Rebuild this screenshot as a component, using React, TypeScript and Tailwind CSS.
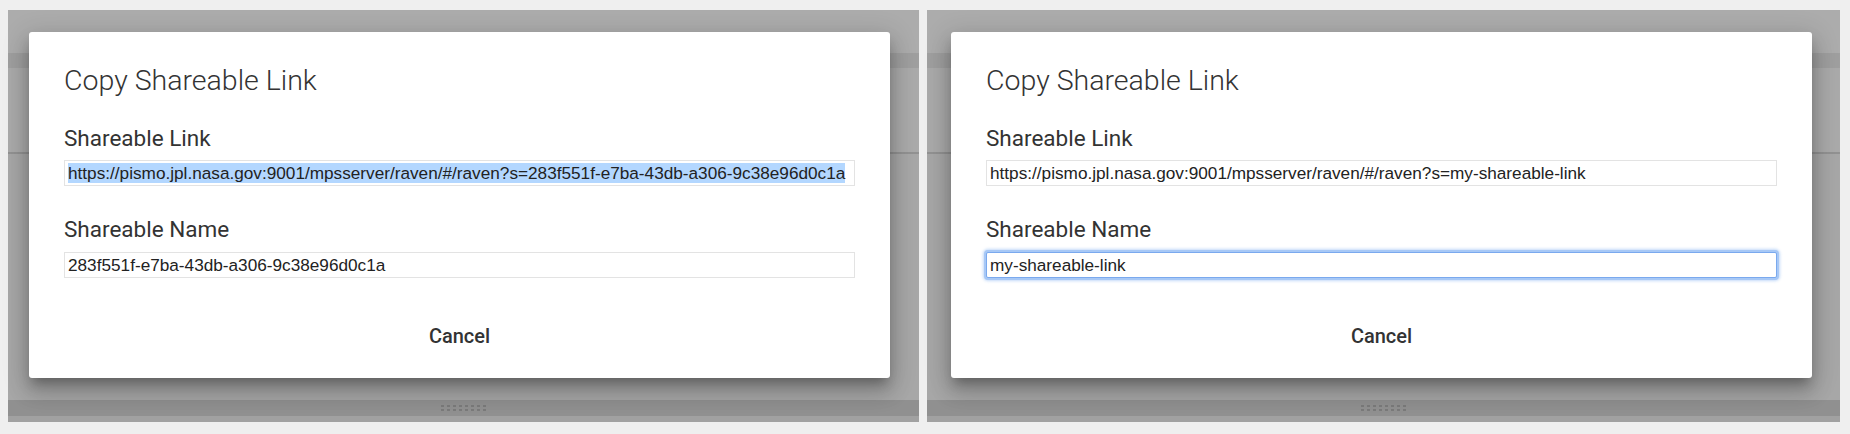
import React from "react";

const LINK_BASE = "https://pismo.jpl.nasa.gov:9001/mpsserver/raven/#/raven?s=";

function GripDots() {
  return (
    <div className="grid grid-cols-8 gap-x-[3px] gap-y-[2px]">
      {Array.from({ length: 16 }).map((_, i) => (
        <span key={i} className="h-[2px] w-[3px] bg-[#7a7a7a]" />
      ))}
    </div>
  );
}

function Backdrop() {
  // the app behind the dialog, dimmed by the overlay
  return (
    <div className="flex h-full flex-col">
      <div className="h-[43px] bg-[#acacac]" />
      <div className="h-[15px] bg-[#9f9f9f]" />
      <div className="h-[84px] bg-[#aaaaaa]" />
      <div className="h-[2px] bg-[#929292]" />
      <div className="flex-1 bg-[#a7a7a7]" />
      <div className="flex h-[16px] items-center justify-center bg-[#909090]">
        <GripDots />
      </div>
      <div className="h-[6px] bg-[#a1a1a1]" />
    </div>
  );
}

function FauxInput({
  value,
  selected,
  focused,
}: {
  value: string;
  selected?: boolean;
  focused?: boolean;
}) {
  return (
    <div
      className={
        focused
          ? "h-[26px] overflow-hidden rounded-[2px] border border-[#7aa9ee] bg-white px-[3px] leading-[24px] shadow-[0_0_0_2px_#a7c8f6,0_0_3px_3px_rgba(120,170,240,0.45)]"
          : "h-[26px] overflow-hidden border border-[#e3e3e3] bg-white px-[3px] leading-[24px]"
      }
    >
      <span
        className={
          "whitespace-nowrap font-['Liberation_Sans',Arial,sans-serif] text-[17.2px] text-[#222] " +
          (selected ? "bg-[#b3d7ff]" : "")
        }
      >
        {value}
      </span>
    </div>
  );
}

function ShareDialog({
  name,
  selectLink,
  focusName,
}: {
  name: string;
  selectLink?: boolean;
  focusName?: boolean;
}) {
  return (
    <div className="w-[861px] rounded-[3px] bg-white px-[35px] pt-[33px] pb-[30px] font-['Roboto',sans-serif] shadow-[0_8px_10px_-4px_rgba(0,0,0,0.25),0_14px_20px_2px_rgba(0,0,0,0.16),0_5px_26px_4px_rgba(0,0,0,0.12)]">
      <h2 className="text-[28.5px] leading-[32px] font-light text-[#333]">Copy Shareable Link</h2>

      <div className="mt-[28px] mb-[9px] text-[22.5px] leading-[26px] text-[#333]">Shareable Link</div>
      <FauxInput value={LINK_BASE + name} selected={selectLink} />

      <div className="mt-[30px] mb-[10px] text-[22.5px] leading-[26px] text-[#333]">Shareable Name</div>
      <FauxInput value={name} focused={focusName} />

      <div className="mt-[46px] flex justify-center">
        <button className="text-[20px] leading-[24px] font-medium text-[#333]">Cancel</button>
      </div>
    </div>
  );
}

export default function App() {
  return (
    <div className="flex h-[434px] w-[1850px] gap-[8px] bg-[#efefef] pt-[10px] pl-[8px]">
      <div className="relative h-[412px] w-[911px]">
        <Backdrop />
        <div className="absolute top-[22px] left-[21px]">
          <ShareDialog name="283f551f-e7ba-43db-a306-9c38e96d0c1a" selectLink />
        </div>
      </div>
      <div className="relative h-[412px] w-[913px]">
        <Backdrop />
        <div className="absolute top-[22px] left-[24px]">
          <ShareDialog name="my-shareable-link" focusName />
        </div>
      </div>
    </div>
  );
}
